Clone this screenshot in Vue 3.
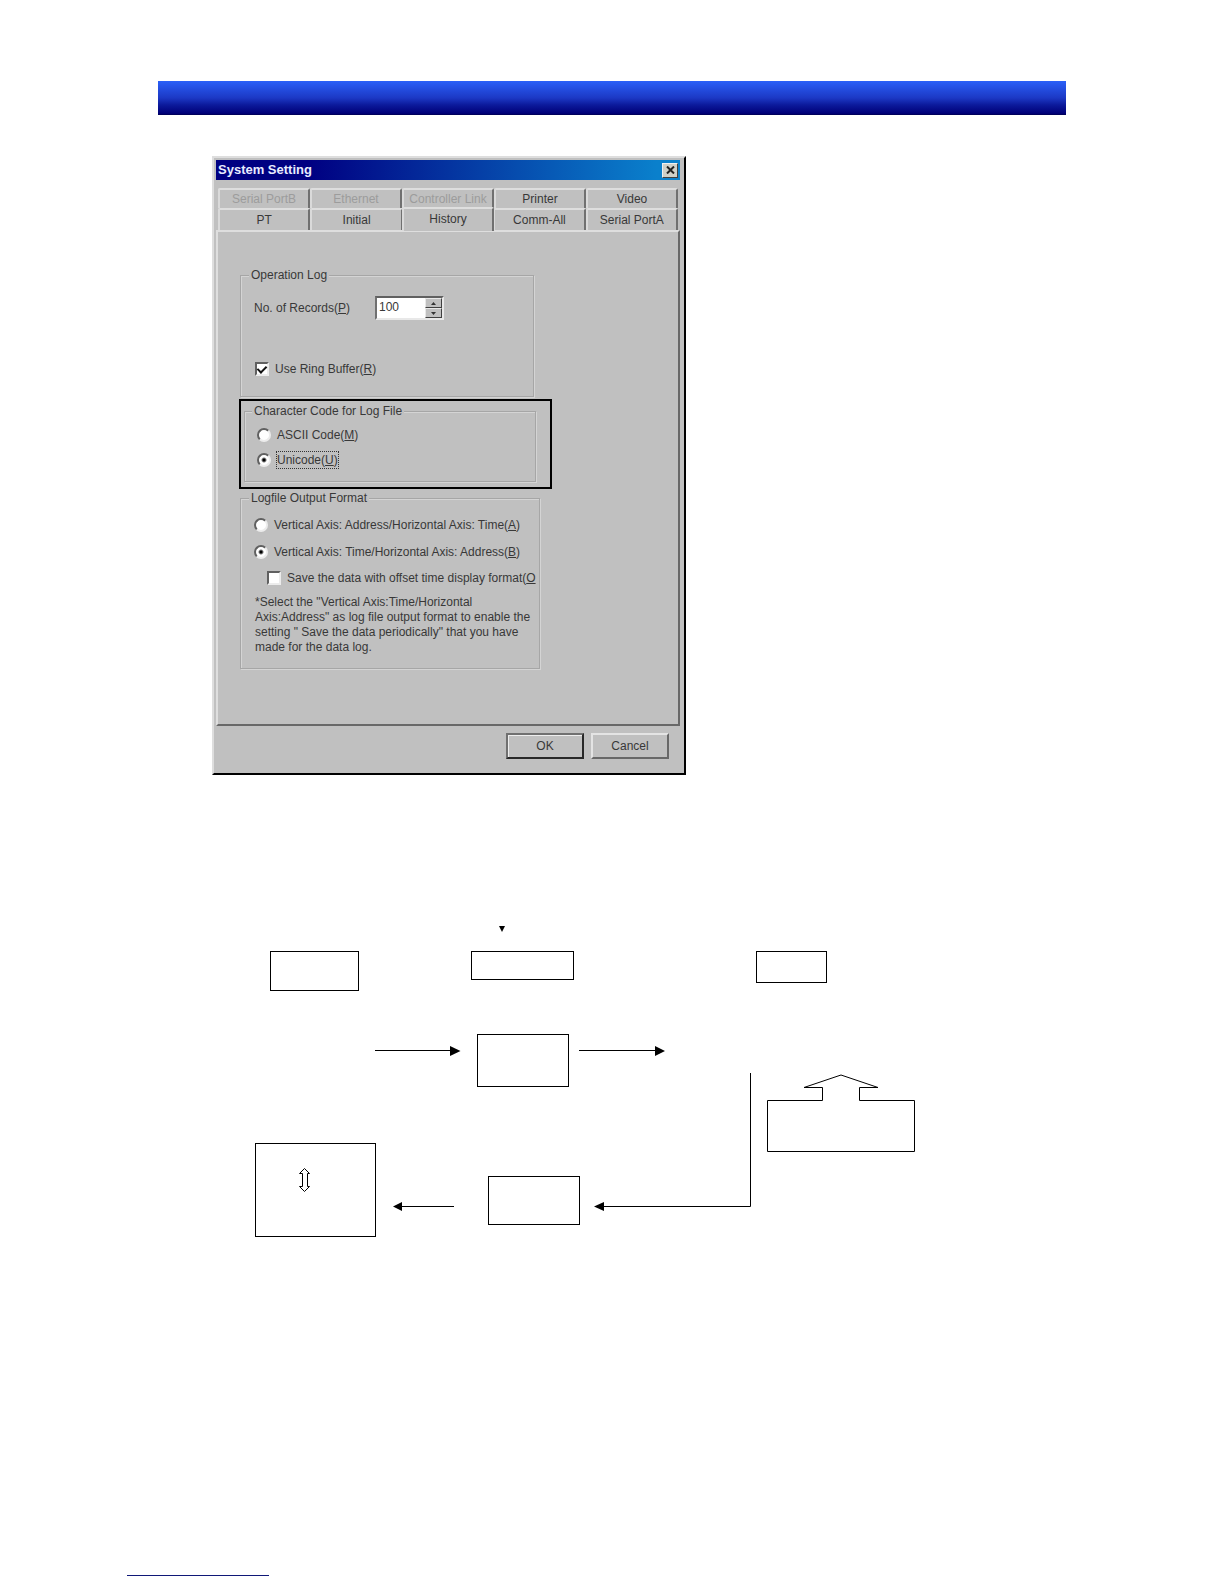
<script setup>
import { ref } from 'vue'

const backTabs = [
  { name: 'Serial PortB', disabled: true },
  { name: 'Ethernet', disabled: true },
  { name: 'Controller Link', disabled: true },
  { name: 'Printer', disabled: false },
  { name: 'Video', disabled: false },
]
const frontTabs = ['PT', 'Initial', 'History', 'Comm-All', 'Serial PortA']

const activeTab = ref('History')
const records = ref(100)
const ringBuffer = ref(true)
const charCode = ref('unicode')
const outputFormat = ref('time')
const offsetTime = ref(false)

const nodes = [
  { x: 270, y: 951, w: 88, h: 39 },
  { x: 471, y: 951, w: 102, h: 28 },
  { x: 756, y: 951, w: 70, h: 31 },
  { x: 477, y: 1034, w: 91, h: 52 },
  { x: 255, y: 1143, w: 120, h: 93 },
  { x: 488, y: 1176, w: 91, h: 48 },
]
</script>

<template>
  <div class="page">
    <header class="banner"></header>

    <section class="dialog" role="dialog" aria-labelledby="dialog-title">
      <div class="titlebar">
        <h1 id="dialog-title">System Setting</h1>
        <button class="close" type="button" aria-label="Close">
          <svg width="9" height="8" viewBox="0 0 9 8"><path d="M1 0.5L8 7.5M8 0.5L1 7.5" stroke="#222" stroke-width="2" /></svg>
        </button>
      </div>

      <div class="tabs">
        <div class="tab-row back">
          <button v-for="t in backTabs" :key="t.name" class="tab" type="button" :disabled="t.disabled">{{ t.name }}</button>
        </div>
        <div class="tab-row">
          <button
            v-for="t in frontTabs"
            :key="t"
            class="tab"
            :class="{ active: t === activeTab }"
            type="button"
            @click="activeTab = t"
          >{{ t }}</button>
        </div>
      </div>

      <form class="panel" @submit.prevent>
        <fieldset class="operation">
          <legend>Operation Log</legend>
          <div class="records">
            <label for="records">No. of Records(<u>P</u>)</label>
            <div class="spin">
              <input id="records" v-model="records" type="text" inputmode="numeric" />
              <div class="arrows">
                <button type="button" aria-label="Increase" @click="records++">
                  <svg width="5" height="3" viewBox="0 0 5 3"><path d="M0 3L2.5 0L5 3Z" fill="#333" /></svg>
                </button>
                <button type="button" aria-label="Decrease" @click="records--">
                  <svg width="5" height="3" viewBox="0 0 5 3"><path d="M0 0L2.5 3L5 0Z" fill="#333" /></svg>
                </button>
              </div>
            </div>
          </div>
          <label class="option">
            <input v-model="ringBuffer" type="checkbox" />
            <span>Use Ring Buffer(<u>R</u>)</span>
          </label>
        </fieldset>

        <div class="highlight">
          <fieldset class="charcode">
            <legend>Character Code for Log File</legend>
            <label class="option">
              <input v-model="charCode" type="radio" name="charcode" value="ascii" />
              <span>ASCII Code(<u>M</u>)</span>
            </label>
            <label class="option">
              <input v-model="charCode" type="radio" name="charcode" value="unicode" />
              <span class="focused">Unicode(<u>U</u>)</span>
            </label>
          </fieldset>
        </div>

        <fieldset class="output">
          <legend>Logfile Output Format</legend>
          <label class="option">
            <input v-model="outputFormat" type="radio" name="format" value="address" />
            <span>Vertical Axis: Address/Horizontal Axis: Time(<u>A</u>)</span>
          </label>
          <label class="option">
            <input v-model="outputFormat" type="radio" name="format" value="time" />
            <span>Vertical Axis: Time/Horizontal Axis: Address(<u>B</u>)</span>
          </label>
          <label class="option nested">
            <input v-model="offsetTime" type="checkbox" />
            <span>Save the data with offset time display format(<u>O</u></span>
          </label>
          <p class="note">
            *Select the "Vertical Axis:Time/Horizontal<br />
            Axis:Address" as log file output format to enable the<br />
            setting " Save the data periodically" that you have<br />
            made for the data log.
          </p>
        </fieldset>
      </form>

      <div class="actions">
        <button class="push default" type="button">OK</button>
        <button class="push" type="button">Cancel</button>
      </div>
    </section>

    <svg class="diagram" width="670" height="320" viewBox="250 920 670 320" role="img" aria-label="Data flow">
      <path d="M499 926H505L502 932Z" />
      <g fill="none" stroke="#000">
        <rect v-for="(n, i) in nodes" :key="i" :x="n.x + 0.5" :y="n.y + 0.5" :width="n.w" :height="n.h" />
        <path d="M375 1050.5H452M579 1050.5H657M400 1206.5H454M602 1206.5H750.5V1073" />
        <path d="M767.5 1100.5H822.5V1087.5H804L841 1075L878 1087.5H859.5V1100.5H914.5V1151.5H767.5Z" />
        <path d="M304.5 1168.5L309.5 1173.5H307.5V1186.5H309.5L304.5 1191.5L299.500 1186.5H302.5V1173.5H299.5Z" />
      </g>
      <path d="M450 1046L460.500 1051L450 1056Z" />
      <path d="M655 1046L665 1051L655 1056Z" />
      <path d="M402 1202V1211L393 1206.5Z" />
      <path d="M604 1202V1211L594 1206.5Z" />
    </svg>

    <footer class="foot"></footer>
  </div>
</template>

<style>
body {
  margin: 0;
  background: #fff;
}
</style>

<style scoped>
.page {
  box-sizing: border-box;
  padding: 81px 158px 8px;
  font: 12px/16px "Liberation Sans", Arial, sans-serif;
  color: #383838;
}
.page * {
  box-sizing: border-box;
}
button,
input {
  font: inherit;
  color: inherit;
  margin: 0;
  padding: 0;
}
.banner {
  height: 34px;
  background: linear-gradient(#2a60f8, #1c38c4 50%, #0c1a9c 70%, #000078 95%, #000050);
}
.dialog {
  width: 474px;
  max-width: 100%;
  margin: 41px 0 0 54px;
  padding: 2px 4px 14px 2px;
  background: #c0c0c0;
  border-style: solid;
  border-width: 2px;
  border-color: #dedede #000 #000 #dedede;
  display: flex;
  flex-direction: column;
}
.titlebar {
  height: 20px;
  display: flex;
  align-items: center;
  justify-content: space-between;
  padding: 0 2px;
  background: linear-gradient(90deg, #000082 20%, #0a80cc 95%);
}
.titlebar h1 {
  margin: 0;
  font-size: 13px;
  line-height: 16px;
  color: #e8ecff;
}
.close {
  width: 16px;
  height: 15px;
  display: grid;
  place-items: center;
  background: #d0d0c8;
  border: 1px solid;
  border-color: #f0f0f0 #404040 #404040 #f0f0f0;
}
.tabs {
  padding: 8px 2px 0;
}
.tab-row {
  display: flex;
}
.tab {
  flex: 1;
  height: 22px;
  background: #c0c0c0;
  border-style: solid;
  border-width: 2px 2px 0;
  border-color: #dedede #707070 #dedede #dadada;
  border-radius: 2px 2px 0 0;
  white-space: nowrap;
}
.back .tab {
  height: 20px;
}
.tab:disabled {
  color: #9c9c9c;
}
.tab.active {
  height: 24px;
  margin: -1px;
  padding-bottom: 3px;
  position: relative;
  z-index: 1;
}
.panel {
  margin: 0;
  padding: 35px 20px 54px 21px;
  border-style: solid;
  border-width: 2px;
  border-color: #dedede #686868 #686868 #dedede;
  display: flex;
  flex-direction: column;
  align-items: flex-start;
}
fieldset {
  margin: 0;
  padding: 0 0 0 14px;
  border: 1px solid #a6a6a6;
  box-shadow: 1px 1px #d4d4d4, inset 1px 1px #d4d4d4;
  min-width: 0;
}
legend {
  margin-left: -6px;
  padding: 0 2px;
  line-height: 16px;
  background: #c0c0c0;
}
.operation {
  width: 294px;
  height: 130px;
  margin-left: 1px;
}
.records {
  display: flex;
  align-items: center;
  gap: 24px;
  height: 24px;
  margin: 13px 0 41px -1px;
}
.records label {
  width: 97px;
  white-space: nowrap;
}
.spin {
  width: 69px;
  height: 24px;
  display: flex;
  background: #fff;
  border: 2px solid;
  border-color: #606060 #e8e8e8 #e8e8e8 #707070;
}
.spin input {
  flex: 1;
  min-width: 0;
  padding: 0 2px 2px;
  border: 0;
  background: none;
  outline: 0;
}
.arrows {
  width: 17px;
  display: flex;
  flex-direction: column;
}
.arrows button {
  flex: 1;
  display: grid;
  place-items: center;
  background: #c0c0c0;
  border: 1px solid;
  border-color: #e8e8e8 #404040 #404040 #e8e8e8;
}
.option {
  display: flex;
  align-items: center;
  gap: 6px;
  white-space: nowrap;
}
.option input {
  appearance: none;
  flex: none;
  width: 14px;
  height: 14px;
  background: #fff;
  border: 2px solid;
  border-color: #606060 #ececec #ececec #606060;
}
.option input[type="radio"] {
  border-radius: 50%;
}
.option input[type="radio"]:checked {
  background: radial-gradient(circle, #000 1px, #fff 3px);
}
.option input[type="checkbox"]:checked {
  display: grid;
  place-items: center;
}
.option input[type="checkbox"]:checked::after {
  content: "";
  width: 4px;
  height: 7px;
  margin-top: -2px;
  border: solid #111;
  border-width: 0 2px 2px 0;
  transform: rotate(45deg);
}
.focused {
  outline: 1px dotted #333;
}
.highlight {
  width: 313px;
  height: 90px;
  margin-top: 2px;
  padding: 2px 0 0 3px;
  border: 2px solid #000;
}
.charcode {
  width: 292px;
  height: 79px;
}
.charcode legend {
  margin-left: -7px;
}
.charcode .option {
  margin: 8px 0 9px -2px;
}
.output {
  width: 300px;
  height: 179px;
  margin: 1px 0 1px 1px;
  padding-left: 13px;
}
.output legend {
  margin-left: -5px;
}
.output .option {
  margin: 11px 0;
}
.output .nested {
  margin: -1px 0 0 13px;
}
.note {
  margin: 9px 0 0 1px;
  line-height: 15px;
  white-space: nowrap;
}
.actions {
  display: flex;
  justify-content: flex-end;
  gap: 7px;
  padding: 7px 11px 0 0;
}
.push {
  width: 78px;
  height: 26px;
  background: #c0c0c0;
  border: 2px solid;
  border-color: #e4e4e4 #686868 #686868 #e4e4e4;
}
.push.default {
  border-color: #707070 #282828 #282828 #707070;
  box-shadow: inset 1px 1px #eee;
}
.diagram {
  display: block;
  max-width: 100%;
  margin: 145px 0 0 92px;
}
.foot {
  width: 142px;
  height: 1px;
  margin: 335px 0 0 -31px;
  background: #101878;
}
</style>
